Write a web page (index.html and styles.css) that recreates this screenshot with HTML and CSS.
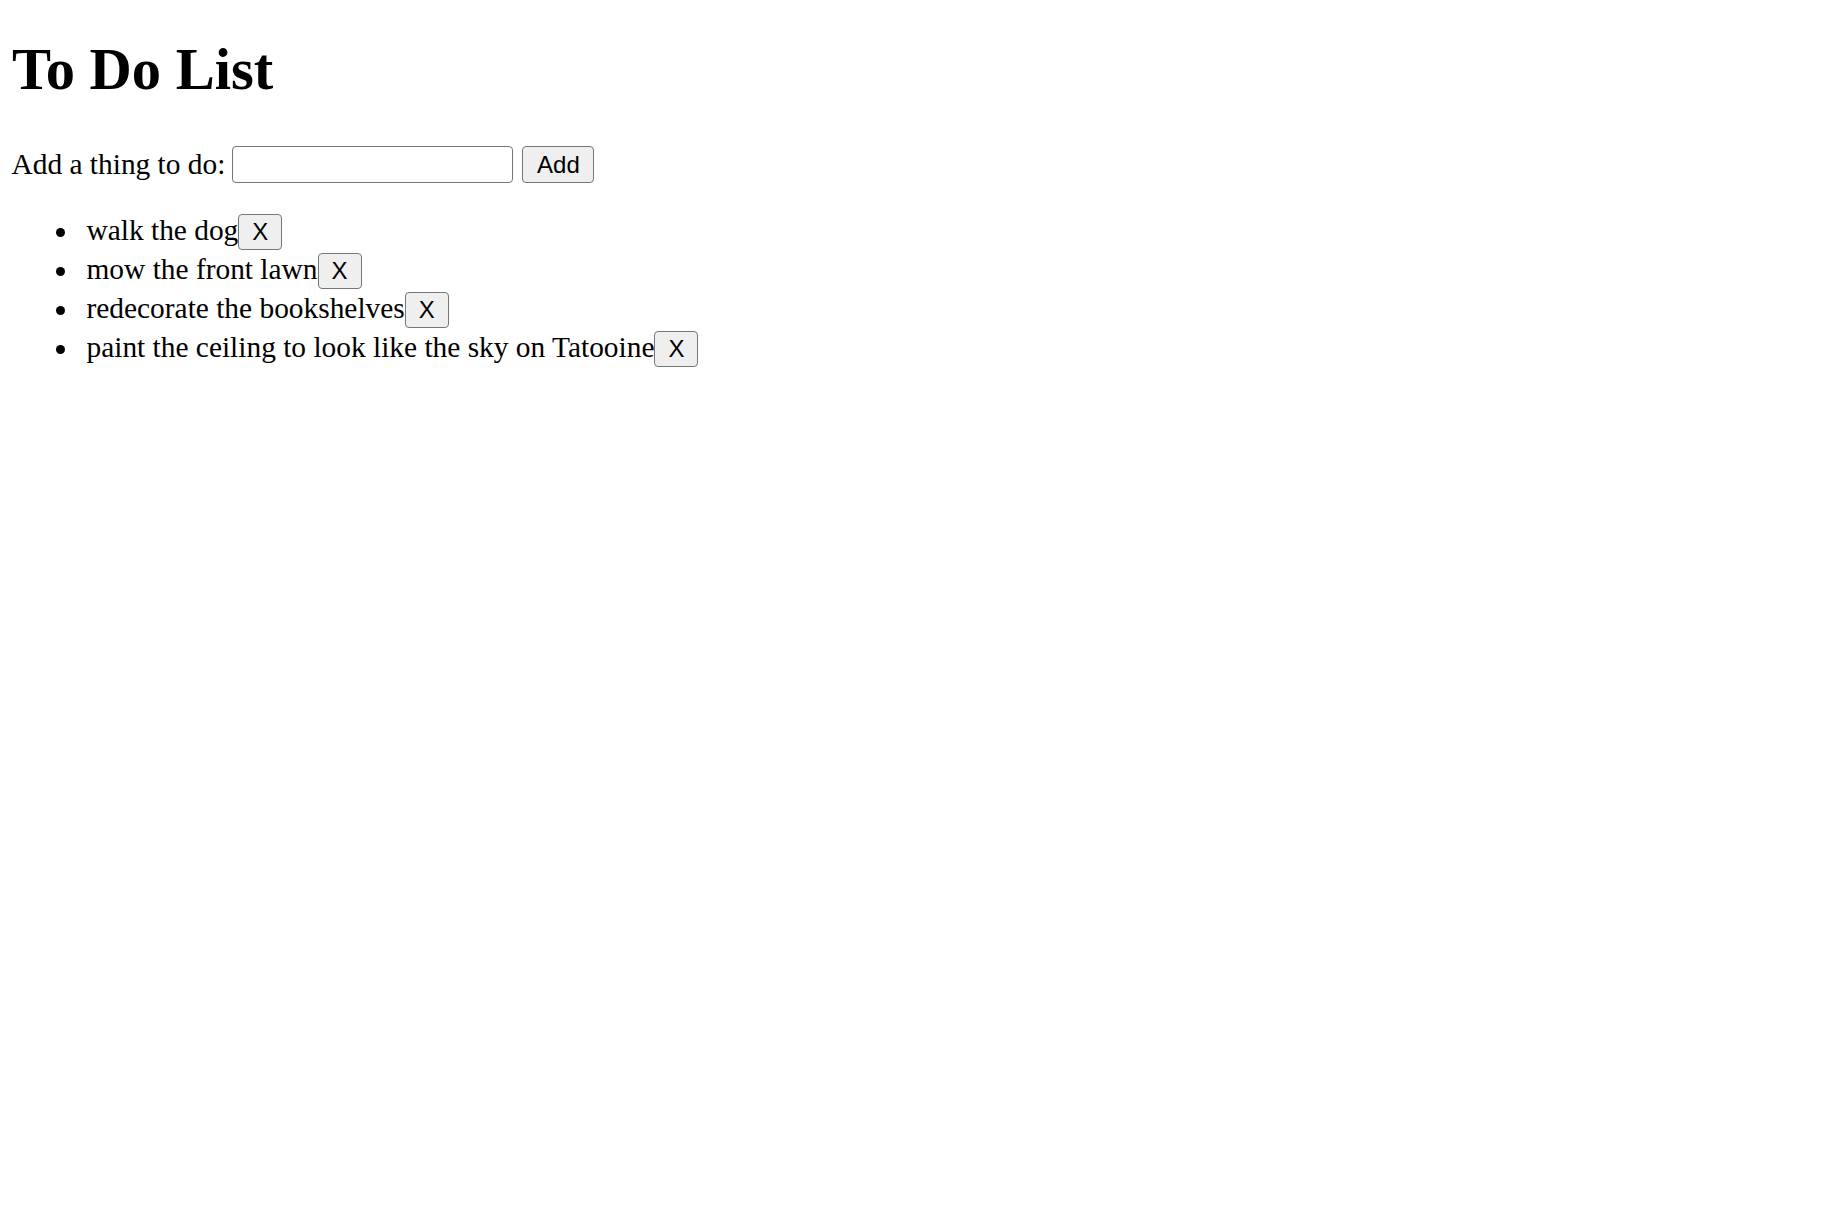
FILE: index.html
```html
<!DOCTYPE html>
<html lang="en">
<head>
<meta charset="utf-8">
<title>To Do List</title>
<link rel="stylesheet" href="styles.css">
</head>
<body class="page">
  <h1 class="title">To Do List</h1>
  <div class="add-row">
    <label class="add-label" for="todo">Add a thing to do:</label>
    <input class="add-input" id="todo" type="text">
    <button class="btn add-btn" type="button">Add</button>
  </div>
  <ul class="todo-list">
    <li class="todo-item">walk the dog<button class="btn remove-btn" type="button">X</button></li>
    <li class="todo-item">mow the front lawn<button class="btn remove-btn" type="button">X</button></li>
    <li class="todo-item">redecorate the bookshelves<button class="btn remove-btn" type="button">X</button></li>
    <li class="todo-item">paint the ceiling to look like the sky on Tatooine<button class="btn remove-btn" type="button">X</button></li>
  </ul>
</body>
</html>
```
FILE: styles.css
```css
html {
  background: #ffffff;
}

.page {
  margin: 0;
  padding: 0 12px;
  background: #ffffff;
  color: #000000;
  font-family: "Liberation Serif", "Times New Roman", serif;
  font-size: 29.4px;
}

.title {
  margin: 37px 0 43px;
  font-size: 58.5px;
  line-height: 66px;
  font-weight: bold;
}

.add-row {
  display: flex;
  align-items: center;
  height: 37px;
}

.add-label {
  margin-left: -0.5px;
  margin-right: 7px;
  line-height: 37px;
}

.add-input {
  box-sizing: border-box;
  width: 281px;
  height: 37px;
  margin: 0 9px 0 0;
  padding: 2px 4px;
  border: 1.8px solid #767676;
  border-radius: 4px;
  background: #ffffff;
  font-family: "Liberation Sans", Arial, sans-serif;
  font-size: 24px;
}

.btn {
  box-sizing: border-box;
  margin: 0;
  padding: 0 12px;
  border: 1.8px solid #767676;
  border-radius: 4px;
  background: #efefef;
  color: #000000;
  font-family: "Liberation Sans", Arial, sans-serif;
  font-size: 24px;
  line-height: 28px;
}

.add-btn {
  width: 72px;
  height: 37px;
  padding: 0;
}

.todo-list {
  margin: 29px 0 0;
  padding: 0 0 12px 74.5px;
  list-style: none;
}

.todo-item {
  height: 39px;
  line-height: 36px;
}

.todo-item::before {
  content: "";
  display: inline-block;
  width: 9px;
  height: 9px;
  margin-left: -30.5px;
  margin-right: 21.5px;
  border-radius: 50%;
  background: #000000;
  vertical-align: 2.8px;
}

.remove-btn {
  width: 44px;
  height: 36px;
  padding: 0;
  vertical-align: baseline;
}
```
